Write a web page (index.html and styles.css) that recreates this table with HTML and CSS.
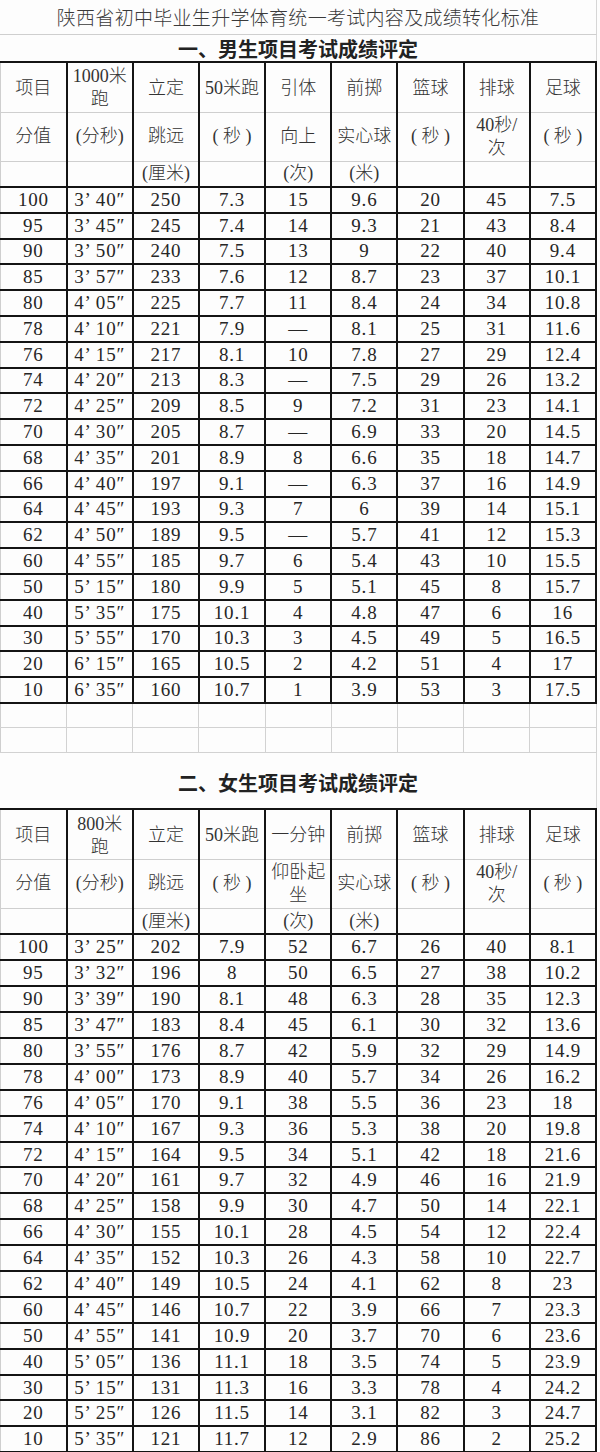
FILE: index.html
```html
<!DOCTYPE html>
<html lang="zh-CN">
<head>
<meta charset="utf-8">
<title>陕西省初中毕业生升学体育统一考试内容及成绩转化标准</title>
<link rel="stylesheet" href="styles.css">
</head>
<body>
<div class="sheet">
  <div class="title">陕西省初中毕业生升学体育统一考试内容及成绩转化标准</div>
  <div class="section s1">一、男生项目考试成绩评定</div>
  <table class="grid">
    <colgroup><col><col><col><col><col><col><col><col><col></colgroup>
    <tbody class="head">
      <tr class="h1"><td>项目</td><td>1000米<br>跑</td><td>立定</td><td>50米跑</td><td>引体</td><td>前掷</td><td>篮球</td><td>排球</td><td>足球</td></tr>
      <tr class="h2"><td>分值</td><td>(分秒)</td><td>跳远</td><td>( 秒 )</td><td>向上</td><td>实心球</td><td>( 秒 )</td><td>40秒/<br>次</td><td>( 秒 )</td></tr>
      <tr class="h3"><td></td><td></td><td>(厘米)</td><td></td><td>(次)</td><td>(米)</td><td></td><td></td><td></td></tr>
    </tbody>
    <tbody class="data">
      <tr><td>100</td><td>3’ 40″</td><td>250</td><td>7.3</td><td>15</td><td>9.6</td><td>20</td><td>45</td><td>7.5</td></tr>
      <tr><td>95</td><td>3’ 45″</td><td>245</td><td>7.4</td><td>14</td><td>9.3</td><td>21</td><td>43</td><td>8.4</td></tr>
      <tr><td>90</td><td>3’ 50″</td><td>240</td><td>7.5</td><td>13</td><td>9</td><td>22</td><td>40</td><td>9.4</td></tr>
      <tr><td>85</td><td>3’ 57″</td><td>233</td><td>7.6</td><td>12</td><td>8.7</td><td>23</td><td>37</td><td>10.1</td></tr>
      <tr><td>80</td><td>4’ 05″</td><td>225</td><td>7.7</td><td>11</td><td>8.4</td><td>24</td><td>34</td><td>10.8</td></tr>
      <tr><td>78</td><td>4’ 10″</td><td>221</td><td>7.9</td><td>—</td><td>8.1</td><td>25</td><td>31</td><td>11.6</td></tr>
      <tr><td>76</td><td>4’ 15″</td><td>217</td><td>8.1</td><td>10</td><td>7.8</td><td>27</td><td>29</td><td>12.4</td></tr>
      <tr><td>74</td><td>4’ 20″</td><td>213</td><td>8.3</td><td>—</td><td>7.5</td><td>29</td><td>26</td><td>13.2</td></tr>
      <tr><td>72</td><td>4’ 25″</td><td>209</td><td>8.5</td><td>9</td><td>7.2</td><td>31</td><td>23</td><td>14.1</td></tr>
      <tr><td>70</td><td>4’ 30″</td><td>205</td><td>8.7</td><td>—</td><td>6.9</td><td>33</td><td>20</td><td>14.5</td></tr>
      <tr><td>68</td><td>4’ 35″</td><td>201</td><td>8.9</td><td>8</td><td>6.6</td><td>35</td><td>18</td><td>14.7</td></tr>
      <tr><td>66</td><td>4’ 40″</td><td>197</td><td>9.1</td><td>—</td><td>6.3</td><td>37</td><td>16</td><td>14.9</td></tr>
      <tr><td>64</td><td>4’ 45″</td><td>193</td><td>9.3</td><td>7</td><td>6</td><td>39</td><td>14</td><td>15.1</td></tr>
      <tr><td>62</td><td>4’ 50″</td><td>189</td><td>9.5</td><td>—</td><td>5.7</td><td>41</td><td>12</td><td>15.3</td></tr>
      <tr><td>60</td><td>4’ 55″</td><td>185</td><td>9.7</td><td>6</td><td>5.4</td><td>43</td><td>10</td><td>15.5</td></tr>
      <tr><td>50</td><td>5’ 15″</td><td>180</td><td>9.9</td><td>5</td><td>5.1</td><td>45</td><td>8</td><td>15.7</td></tr>
      <tr><td>40</td><td>5’ 35″</td><td>175</td><td>10.1</td><td>4</td><td>4.8</td><td>47</td><td>6</td><td>16</td></tr>
      <tr><td>30</td><td>5’ 55″</td><td>170</td><td>10.3</td><td>3</td><td>4.5</td><td>49</td><td>5</td><td>16.5</td></tr>
      <tr><td>20</td><td>6’ 15″</td><td>165</td><td>10.5</td><td>2</td><td>4.2</td><td>51</td><td>4</td><td>17</td></tr>
      <tr><td>10</td><td>6’ 35″</td><td>160</td><td>10.7</td><td>1</td><td>3.9</td><td>53</td><td>3</td><td>17.5</td></tr>
    </tbody>
    <tbody class="blank">
      <tr><td></td><td></td><td></td><td></td><td></td><td></td><td></td><td></td><td></td></tr>
      <tr><td></td><td></td><td></td><td></td><td></td><td></td><td></td><td></td><td></td></tr>
    </tbody>
  </table>
  <div class="section s2">二、女生项目考试成绩评定</div>
  <table class="grid">
    <colgroup><col><col><col><col><col><col><col><col><col></colgroup>
    <tbody class="head">
      <tr class="h1"><td>项目</td><td>800米<br>跑</td><td>立定</td><td>50米跑</td><td>一分钟</td><td>前掷</td><td>篮球</td><td>排球</td><td>足球</td></tr>
      <tr class="h2"><td>分值</td><td>(分秒)</td><td>跳远</td><td>( 秒 )</td><td>仰卧起<br>坐</td><td>实心球</td><td>( 秒 )</td><td>40秒/<br>次</td><td>( 秒 )</td></tr>
      <tr class="h3"><td></td><td></td><td>(厘米)</td><td></td><td>(次)</td><td>(米)</td><td></td><td></td><td></td></tr>
    </tbody>
    <tbody class="data d2">
      <tr><td>100</td><td>3’ 25″</td><td>202</td><td>7.9</td><td>52</td><td>6.7</td><td>26</td><td>40</td><td>8.1</td></tr>
      <tr><td>95</td><td>3’ 32″</td><td>196</td><td>8</td><td>50</td><td>6.5</td><td>27</td><td>38</td><td>10.2</td></tr>
      <tr><td>90</td><td>3’ 39″</td><td>190</td><td>8.1</td><td>48</td><td>6.3</td><td>28</td><td>35</td><td>12.3</td></tr>
      <tr><td>85</td><td>3’ 47″</td><td>183</td><td>8.4</td><td>45</td><td>6.1</td><td>30</td><td>32</td><td>13.6</td></tr>
      <tr><td>80</td><td>3’ 55″</td><td>176</td><td>8.7</td><td>42</td><td>5.9</td><td>32</td><td>29</td><td>14.9</td></tr>
      <tr><td>78</td><td>4’ 00″</td><td>173</td><td>8.9</td><td>40</td><td>5.7</td><td>34</td><td>26</td><td>16.2</td></tr>
      <tr><td>76</td><td>4’ 05″</td><td>170</td><td>9.1</td><td>38</td><td>5.5</td><td>36</td><td>23</td><td>18</td></tr>
      <tr><td>74</td><td>4’ 10″</td><td>167</td><td>9.3</td><td>36</td><td>5.3</td><td>38</td><td>20</td><td>19.8</td></tr>
      <tr><td>72</td><td>4’ 15″</td><td>164</td><td>9.5</td><td>34</td><td>5.1</td><td>42</td><td>18</td><td>21.6</td></tr>
      <tr><td>70</td><td>4’ 20″</td><td>161</td><td>9.7</td><td>32</td><td>4.9</td><td>46</td><td>16</td><td>21.9</td></tr>
      <tr><td>68</td><td>4’ 25″</td><td>158</td><td>9.9</td><td>30</td><td>4.7</td><td>50</td><td>14</td><td>22.1</td></tr>
      <tr><td>66</td><td>4’ 30″</td><td>155</td><td>10.1</td><td>28</td><td>4.5</td><td>54</td><td>12</td><td>22.4</td></tr>
      <tr><td>64</td><td>4’ 35″</td><td>152</td><td>10.3</td><td>26</td><td>4.3</td><td>58</td><td>10</td><td>22.7</td></tr>
      <tr><td>62</td><td>4’ 40″</td><td>149</td><td>10.5</td><td>24</td><td>4.1</td><td>62</td><td>8</td><td>23</td></tr>
      <tr><td>60</td><td>4’ 45″</td><td>146</td><td>10.7</td><td>22</td><td>3.9</td><td>66</td><td>7</td><td>23.3</td></tr>
      <tr><td>50</td><td>4’ 55″</td><td>141</td><td>10.9</td><td>20</td><td>3.7</td><td>70</td><td>6</td><td>23.6</td></tr>
      <tr><td>40</td><td>5’ 05″</td><td>136</td><td>11.1</td><td>18</td><td>3.5</td><td>74</td><td>5</td><td>23.9</td></tr>
      <tr><td>30</td><td>5’ 15″</td><td>131</td><td>11.3</td><td>16</td><td>3.3</td><td>78</td><td>4</td><td>24.2</td></tr>
      <tr><td>20</td><td>5’ 25″</td><td>126</td><td>11.5</td><td>14</td><td>3.1</td><td>82</td><td>3</td><td>24.7</td></tr>
      <tr><td>10</td><td>5’ 35″</td><td>121</td><td>11.7</td><td>12</td><td>2.9</td><td>86</td><td>2</td><td>25.2</td></tr>
    </tbody>
  </table>
</div>
</body>
</html>
```
FILE: styles.css
```css
html, body {
  margin: 0;
  padding: 0;
  background: #fdfdfd;
}
body {
  width: 600px;
  font-family: "Liberation Serif", "DejaVu Serif", "Noto Sans CJK SC", serif;
  color: #2a2a2a;
}
.sheet {
  width: 597px;
}
.title {
  height: 35px;
  box-sizing: border-box;
  padding-bottom: 1px;
  border-bottom: 1px solid #cfcfcf;
  border-right: 1px solid #d6d6d6;
  display: flex;
  align-items: center;
  justify-content: center;
  font-family: "Noto Sans CJK SC", sans-serif;
  font-size: 19px;
  font-weight: 300;
  letter-spacing: 0.3px;
  color: #3a3a3a;
}
.section {
  display: flex;
  align-items: center;
  justify-content: center;
  font-family: "Noto Sans CJK SC", sans-serif;
  font-size: 20px;
  font-weight: 700;
  color: #222;
  border-right: 1px solid #d6d6d6;
}
.s1 {
  height: 26px;
}
.s2 {
  height: 55px;
  padding-top: 4px;
  box-sizing: border-box;
}
.grid {
  width: 597px;
  table-layout: fixed;
  border-collapse: collapse;
}
.grid td {
  padding: 0;
  text-align: center;
  vertical-align: middle;
  border: 2px solid #141414;
  overflow: hidden;
  white-space: nowrap;
}
.head td {
  font-size: 18px;
  line-height: 23px;
  font-weight: 300;
  color: #333;
  border-top: 1px solid #cfcfcf;
  border-bottom: 1px solid #cfcfcf;
}
.head .h1 td {
  border-top: 2px solid #141414;
  padding-top: 2px;
}
.head .h1 { height: 50px; }
.head .h2 { height: 49px; }
.head .h3 { height: 26px; }
.data td {
  font-size: 19px;
  line-height: 22px;
  letter-spacing: 0.8px;
  color: #262626;
}
.data tr { height: 25.8px; }
.d2 tr { height: 25.9px; }
.blank td {
  border: 1px solid #d2d2d2;
}
.blank tr:first-child td {
  border-top: 2px solid #141414;
}
.blank tr { height: 25px; }
.grid td:first-child {
  border-left: 1px solid #cfcfcf;
}
```
